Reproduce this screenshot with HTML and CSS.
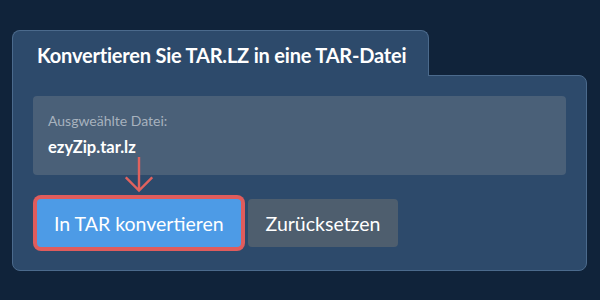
FILE: index.html
```html
<!DOCTYPE html>
<html lang="de">
<head>
    <meta charset="UTF-8">
    <meta name="viewport" content="width=device-width, initial-scale=1.0">
    <title>TAR.LZ in TAR konvertieren</title>
    <link rel="stylesheet" href="styles.css">
</head>
<body>
    <div class="converter">
        <div class="tab">
            <h2>Konvertieren Sie TAR.LZ in eine TAR-Datei</h2>
        </div>
        <div class="panel">
            <div class="file-box">
                <div class="file-label">Ausgweählte Datei:</div>
                <div class="file-name">ezyZip.tar.lz</div>
            </div>
            <div class="actions">
                <div class="convert-wrap">
                    <svg class="hint-arrow" width="28" height="36" viewBox="0 0 28 36">
                        <path d="M14 0 V33.5 M0.8 20.3 L14 33.5 L27.2 20.3" fill="none" stroke="#e0625e" stroke-width="2.4"/>
                    </svg>
                    <button class="btn btn-convert">In TAR konvertieren</button>
                </div>
                <button class="btn btn-reset">Zurücksetzen</button>
            </div>
        </div>
    </div>
</body>
</html>
```

FILE: styles.css
```css
body {
    margin: 0;
    padding: 30px 0 0 12px;
    background-color: #10233a;
    font-family: Lato, "Open Sans", sans-serif;
    color: #fff;
}
.converter {
    width: 575px;
}
.tab {
    position: relative;
    z-index: 1;
    display: inline-block;
    height: 46px;
    box-sizing: border-box;
    padding: 1px 22px 0 24px;
    margin-bottom: -1px;
    background-color: #2d4a6b;
    border: 1px solid #4b6a8c;
    border-bottom: none;
    border-radius: 8px 8px 0 0;
}
.tab h2 {
    margin: 0;
    font-size: 20px;
    font-weight: 700;
    line-height: 46px;
    letter-spacing: -0.2px;
    white-space: nowrap;
}
.panel {
    background-color: #2d4a6b;
    border: 1px solid #4b6a8c;
    border-radius: 0 8px 8px 8px;
    padding: 20px 20px 23px;
}
.file-box {
    background-color: #4a6078;
    border-radius: 4px;
    padding: 16px 15px 0;
    height: 63px;
}
.file-label {
    font-size: 14px;
    color: #a7b2be;
    line-height: 18px;
}
.file-name {
    margin-top: 7px;
    font-size: 16.5px;
    font-weight: 700;
    line-height: 20px;
}
.actions {
    display: flex;
    gap: 7px;
    margin-top: 24px;
}
.convert-wrap {
    position: relative;
    margin-left: 4px;
}
.hint-arrow {
    position: absolute;
    left: 88px;
    top: -42px;
}
.btn {
    height: 48px;
    border: none;
    border-radius: 4px;
    color: #fff;
    font-family: Lato, "Open Sans", sans-serif;
    font-size: 19.5px;
    cursor: pointer;
}
.btn-convert {
    padding: 0 17px;
    background-color: #4d9be6;
    box-shadow: 0 0 0 4px #e05c5c;
}
.btn-reset {
    padding: 0 18px;
    background-color: #4e5e6e;
}
```
